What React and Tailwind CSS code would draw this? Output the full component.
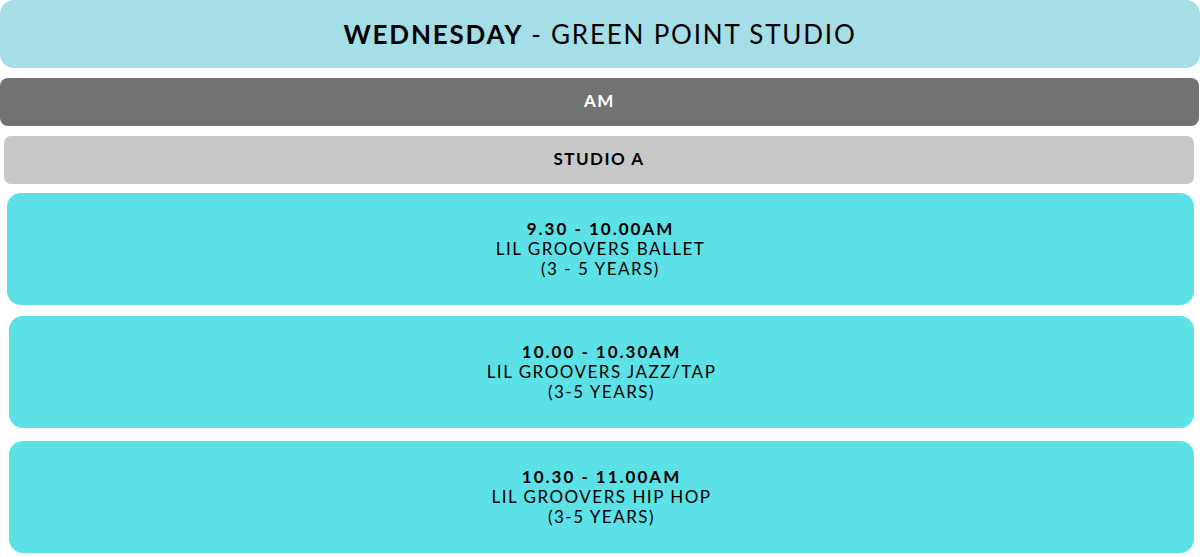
import React from 'react';

const classes = [
  { time: '9.30 - 10.00AM', name: 'LIL GROOVERS BALLET', ages: '(3 - 5 YEARS)', box: 'mt-[9px] ml-[7px] mr-[6px]' },
  { time: '10.00 - 10.30AM', name: 'LIL GROOVERS JAZZ/TAP', ages: '(3-5 YEARS)', box: 'mt-[11px] ml-[9px] mr-[6px]' },
  { time: '10.30 - 11.00AM', name: 'LIL GROOVERS HIP HOP', ages: '(3-5 YEARS)', box: 'mt-[13px] ml-[9px] mr-[6px]' },
];

const ClassCard = ({ time, name, ages, box }) => (
  <div className={`${box} h-[112px] rounded-[14px] bg-[#5ce1e6] flex flex-col items-center justify-center text-center text-black`}>
    <div className="text-[17px] leading-[20px] font-bold tracking-[2px]">{time}</div>
    <div className="text-[17px] leading-[20px] tracking-[1.5px]">{name}</div>
    <div className="text-[17px] leading-[20px] tracking-[1.5px]">{ages}</div>
  </div>
);

export default function App() {
  return (
    <div className="w-[1200px] h-[557px] bg-white flex flex-col font-['Lato',sans-serif]">
      {/* Day header */}
      <div className="h-[68px] rounded-[14px] bg-[#a5dee6] flex items-center justify-center text-[26px] tracking-[1.8px] text-black">
        <span className="font-bold">WEDNESDAY</span>
        <span className="ml-2">- GREEN POINT STUDIO</span>
      </div>

      {/* Session */}
      <div className="mt-[10px] mr-[1px] h-[48px] rounded-[8px] bg-[#737373] flex items-center justify-center text-white font-bold text-[17px] tracking-[1.5px] pb-[2px]">
        AM
      </div>

      {/* Studio */}
      <div className="mt-[10px] ml-[4px] mr-[6px] h-[48px] rounded-[7px] bg-[#c8c8c8] flex items-center justify-center text-black font-bold text-[17px] tracking-[1.5px] pb-[3px]">
        STUDIO A
      </div>

      {classes.map((c) => (
        <ClassCard key={c.time} {...c} />
      ))}
    </div>
  );
}
